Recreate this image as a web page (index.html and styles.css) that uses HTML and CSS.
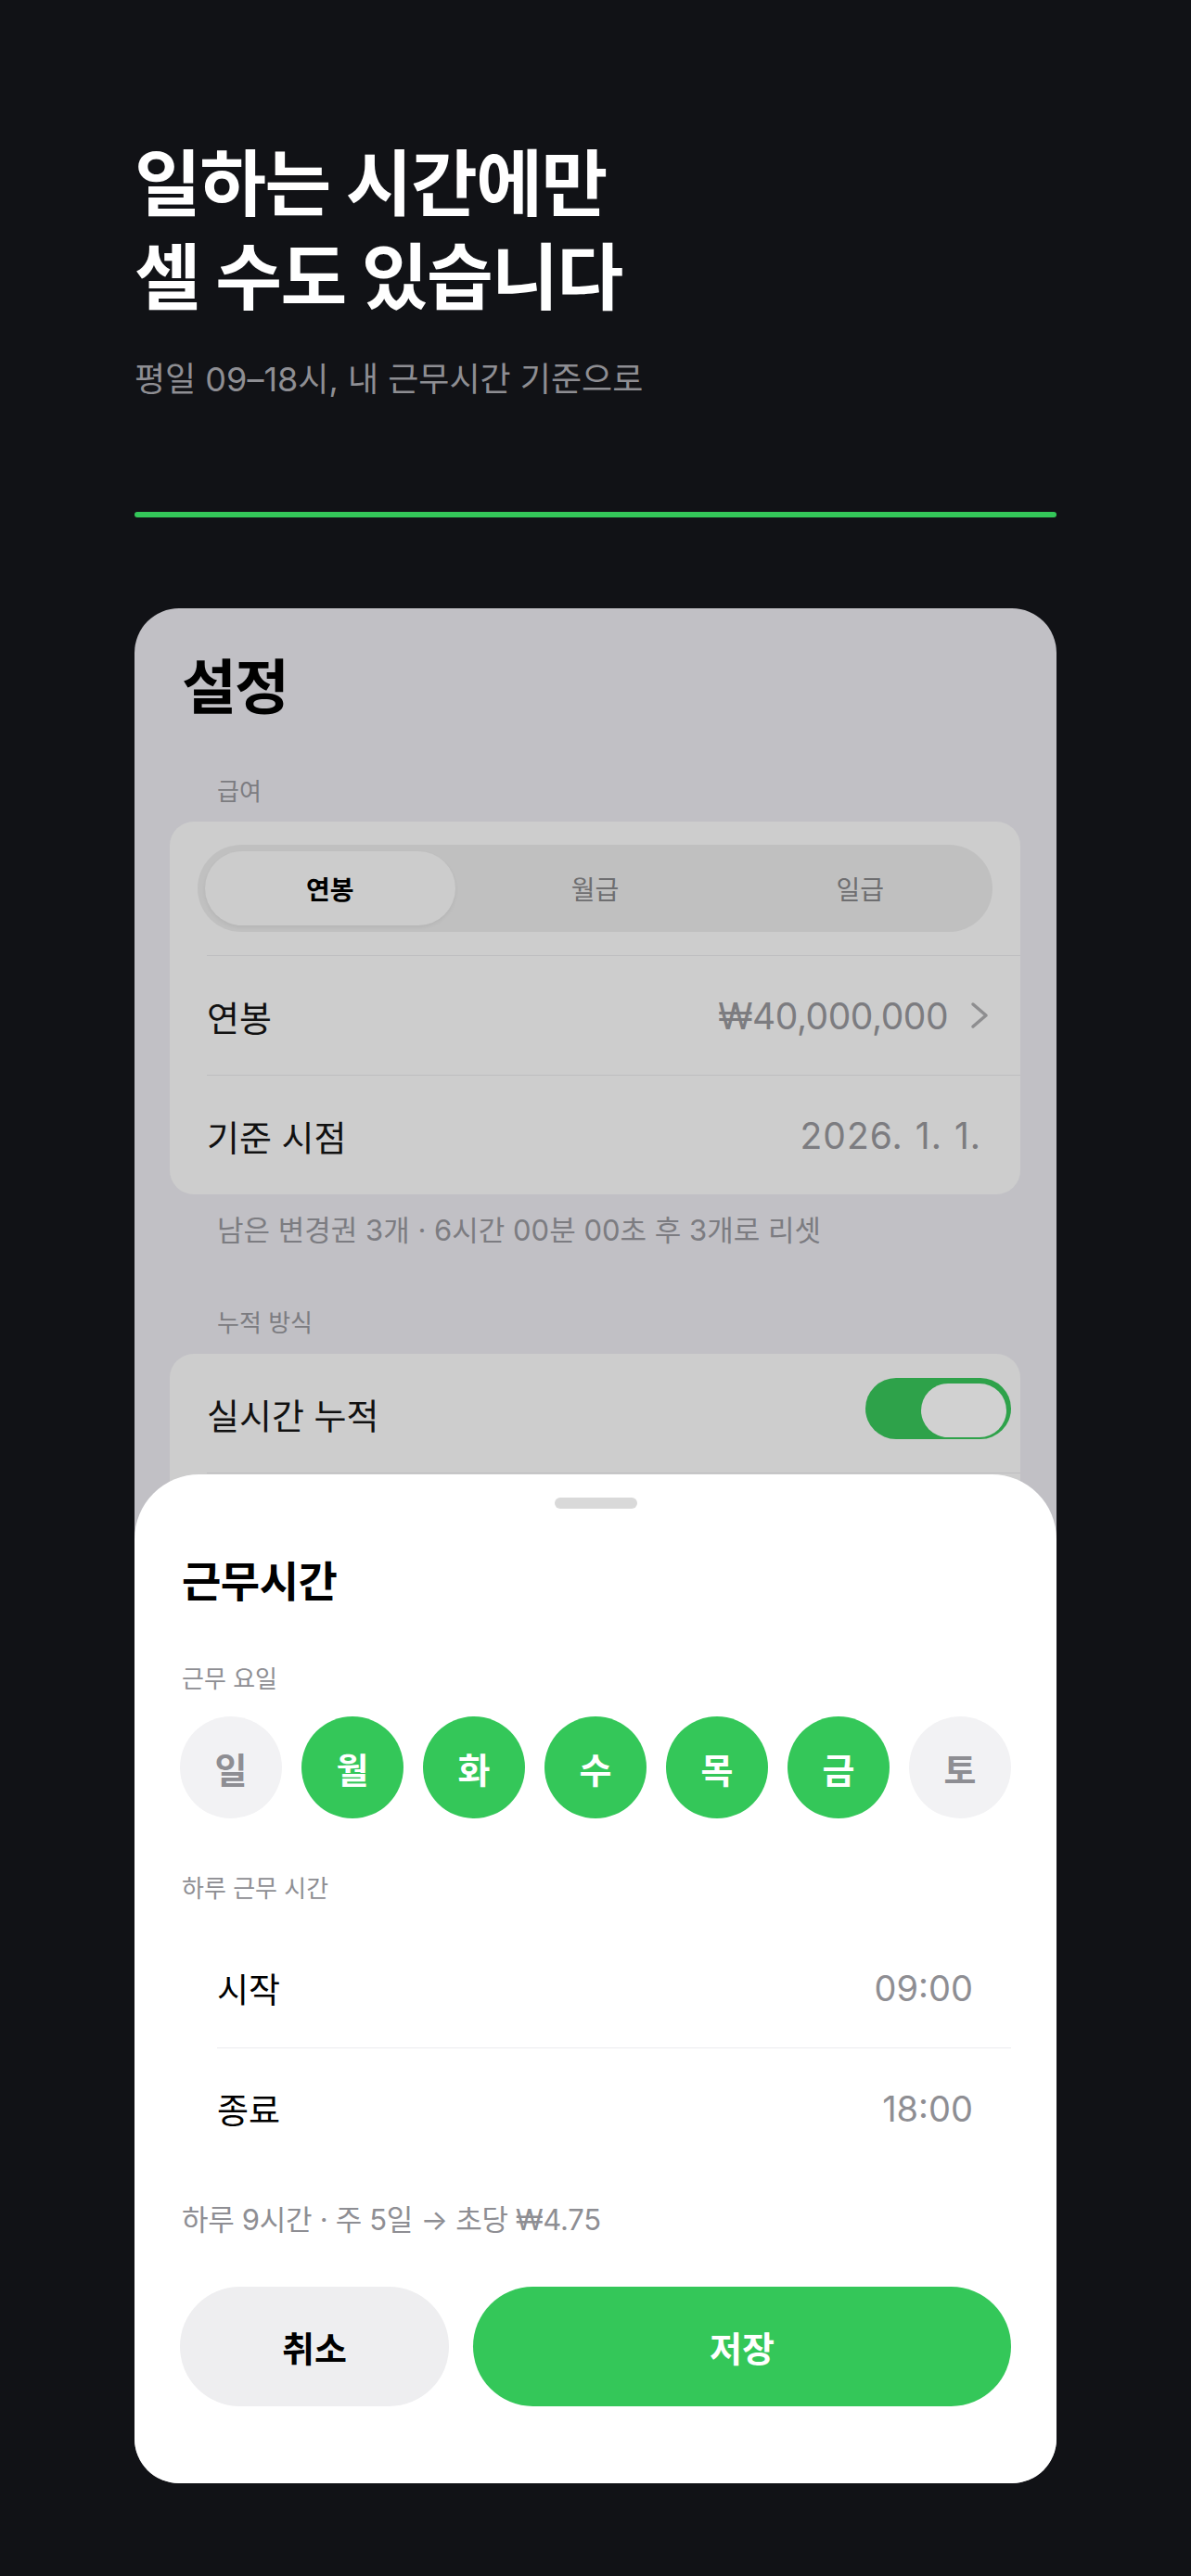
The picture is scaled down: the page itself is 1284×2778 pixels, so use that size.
FILE: index.html
```html
<!DOCTYPE html>
<html lang="ko">
<head>
    <meta charset="UTF-8">
    <meta name="viewport" content="width=device-width, initial-scale=1.0">
    <title>근무시간 설정</title>
    <link rel="stylesheet" href="styles.css">
</head>
<body>
    <div class="page">
        <!-- 상단 문구 -->
        <header class="hero">
            <h1 class="hero-title">일하는 시간에만<br>셀 수도 있습니다</h1>
            <p class="hero-sub">평일 09–18시, 내 근무시간 기준으로</p>
            <div class="hero-line"></div>
        </header>

        <!-- 폰 화면 -->
        <div class="phone">
            <div class="settings">
                <h2 class="settings-title">설정</h2>

                <div class="group-label">급여</div>
                <div class="group">
                    <div class="segment-row">
                        <div class="segment">
                            <span class="seg active">연봉</span>
                            <span class="seg">월급</span>
                            <span class="seg">일급</span>
                        </div>
                    </div>
                    <div class="row">
                        <span class="row-label">연봉</span>
                        <span class="row-value">₩40,000,000
                            <svg class="chevron" width="24" height="32" viewBox="0 0 24 32"><polyline points="5,4 19,16 5,28" fill="none" stroke="#8e8e90" stroke-width="3.5" stroke-linecap="round" stroke-linejoin="round"/></svg>
                        </span>
                    </div>
                    <div class="row">
                        <span class="row-label">기준 시점</span>
                        <span class="row-value row-date">2026. 1. 1.</span>
                    </div>
                </div>
                <p class="group-note">남은 변경권 3개 · 6시간 00분 00초 후 3개로 리셋</p>

                <div class="group-label">누적 방식</div>
                <div class="group">
                    <div class="row row-toggle">
                        <span class="row-label">실시간 누적</span>
                        <span class="toggle"><span class="knob"></span></span>
                    </div>
                    <div class="row">
                        <span class="row-label">근무시간</span>
                        <span class="row-value">평일 09:00–18:00</span>
                    </div>
                </div>
            </div>

            <!-- 근무시간 시트 -->
            <div class="sheet">
                <div class="grabber"></div>
                <h3 class="sheet-title">근무시간</h3>

                <div class="sheet-label label-days">근무 요일</div>
                <div class="days">
                    <span class="day">일</span>
                    <span class="day on">월</span>
                    <span class="day on">화</span>
                    <span class="day on">수</span>
                    <span class="day on">목</span>
                    <span class="day on">금</span>
                    <span class="day">토</span>
                </div>

                <div class="sheet-label label-hours">하루 근무 시간</div>
                <div class="time-list">
                    <div class="time-row">
                        <span class="time-label">시작</span>
                        <span class="time-value">09:00</span>
                    </div>
                    <div class="time-row">
                        <span class="time-label">종료</span>
                        <span class="time-value">18:00</span>
                    </div>
                </div>

                <p class="summary">하루 9시간 · 주 5일 → 초당 ₩4.75</p>

                <div class="buttons">
                    <button class="btn btn-cancel">취소</button>
                    <button class="btn btn-save">저장</button>
                </div>
            </div>
        </div>
    </div>
</body>
</html>
```

FILE: styles.css
```css
body {
    margin: 0;
    padding: 0;
    background-color: #111216;
    font-family: Inter, "Noto Sans CJK KR", sans-serif;
    color: #000;
}
.page {
    padding: 148px 145px 0;
}
/* 상단 문구 */
.hero-title {
    margin: 0;
    color: #ffffff;
    font-size: 78px;
    line-height: 101px;
    font-weight: 700;
    letter-spacing: -1.5px;
}
.hero-sub {
    margin: 35px 0 0;
    color: #8e8e93;
    font-size: 36px;
    line-height: 48px;
    letter-spacing: 0;
}
.hero-line {
    margin-top: 119px;
    height: 6px;
    border-radius: 3px;
    background-color: #34c759;
}
/* 폰 화면 */
.phone {
    position: relative;
    margin-top: 98px;
    height: 2022px;
    border-radius: 48px;
    overflow: hidden;
    background-color: #c1c0c5;
}
.settings {
    padding: 47px 39px 0 38px;
}
.settings-title {
    margin: 0 0 0 13px;
    font-size: 64px;
    line-height: 76px;
    font-weight: 700;
    letter-spacing: -2px;
}
.group-label {
    margin: 60px 0 0 51px;
    font-size: 26px;
    line-height: 30px;
    color: #7c7c81;
}
.group-label + .group {
    margin-top: 17px;
}
.group {
    background-color: #cdcdcd;
    border-radius: 26px;
    padding-left: 40px;
    overflow: hidden;
}
.segment-row {
    height: 144px;
    margin-left: -10px;
    padding: 25px 30px 0 0;
    box-sizing: border-box;
}
.segment {
    display: flex;
    height: 94px;
    border-radius: 47px;
    background-color: #c0c0c0;
}
.seg {
    flex: 1 1 0;
    display: flex;
    align-items: center;
    justify-content: center;
    margin: 7px 8px;
    border-radius: 40px;
    font-size: 28px;
    color: #6e6e70;
}
.seg.active {
    background-color: #cccccc;
    color: #000;
    font-weight: 600;
    box-shadow: 0 2px 4px rgba(0, 0, 0, 0.06);
}
.row {
    display: flex;
    align-items: center;
    justify-content: space-between;
    height: 129px;
    box-sizing: border-box;
    padding-right: 42px;
    border-top: 1px solid #bebec0;
}
.segment-row + .row {
    padding-right: 32px;
}
.row:first-child {
    border-top: none;
    height: 128px;
}
.row-label {
    font-size: 38px;
    color: #111;
}
.row-value {
    display: flex;
    align-items: center;
    gap: 22px;
    font-size: 39px;
    color: #7c7c80;
    letter-spacing: -0.5px;
}
.row-value.row-date {
    letter-spacing: 1px;
    word-spacing: 1px;
}
.group-note {
    margin: 21px 0 0 51px;
    font-size: 31px;
    line-height: 36px;
    color: #7c7c81;
    letter-spacing: 0;
}
.group-note + .group-label {
    margin-top: 67px;
}
.group-note ~ .group {
    margin-top: 18px;
}
.row-toggle {
    padding-right: 10px;
}
/* 토글 */
.toggle {
    position: relative;
    width: 157px;
    height: 66px;
    margin-top: -10px;
    border-radius: 33px;
    background-color: #2ea24a;
}
.toggle::before {
    content: "";
    position: absolute;
    left: 10px;
    right: 48px;
    top: 12px;
    bottom: -10px;
    border-radius: 33px;
    background-color: #bdbdbd;
    z-index: -1;
}
.toggle .knob {
    position: absolute;
    right: 5px;
    top: 6px;
    width: 92px;
    height: 58px;
    border-radius: 30px;
    background-color: #d1d1d1;
}
/* 시트 */
.sheet {
    position: absolute;
    left: 0;
    right: 0;
    bottom: 0;
    background-color: #ffffff;
    border-radius: 70px 70px 0 0;
    padding: 25px 49px 83px;
}
.grabber {
    width: 89px;
    height: 12px;
    margin: 0 auto;
    border-radius: 6px;
    background-color: #d9d9d9;
}
.sheet-title {
    margin: 48px 0 0 2px;
    font-size: 46px;
    line-height: 60px;
    font-weight: 600;
    letter-spacing: -0.5px;
}
.sheet-label {
    margin: 61px 0 0 2px;
    font-size: 26px;
    line-height: 30px;
    color: #8e8e93;
}
.days {
    display: flex;
    gap: 21px;
    margin-top: 25px;
}
.day {
    display: flex;
    align-items: center;
    justify-content: center;
    width: 110px;
    height: 110px;
    border-radius: 50%;
    background-color: #f2f2f4;
    color: #8e8e93;
    font-size: 38px;
    font-weight: 600;
}
.day.on {
    background-color: #34c759;
    color: #ffffff;
}
.time-list {
    margin: 28px 0 0 40px;
}
.time-row {
    display: flex;
    align-items: center;
    justify-content: space-between;
    height: 128px;
    padding-right: 41px;
}
.time-row + .time-row {
    border-top: 1px solid #ececee;
    height: 129px;
}
.time-label {
    font-size: 37px;
}
.time-value {
    font-size: 38px;
    color: #8e8e93;
}
.summary {
    margin: 38px 0 0 2px;
    font-size: 31px;
    line-height: 36px;
    color: #8e8e93;
    letter-spacing: -0.3px;
}
.buttons {
    display: flex;
    gap: 26px;
    margin-top: 54px;
}
.btn {
    height: 129px;
    padding: 0;
    border: none;
    border-radius: 65px;
    font-family: Inter, "Noto Sans CJK KR", sans-serif;
    font-size: 38px;
    cursor: pointer;
}
.btn-cancel {
    flex: 1 1 0;
    background-color: #eeeef0;
    color: #000;
    font-weight: 700;
}
.btn-save {
    flex: 2 1 0;
    background-color: #34c759;
    color: #ffffff;
    font-weight: 600;
}
```
